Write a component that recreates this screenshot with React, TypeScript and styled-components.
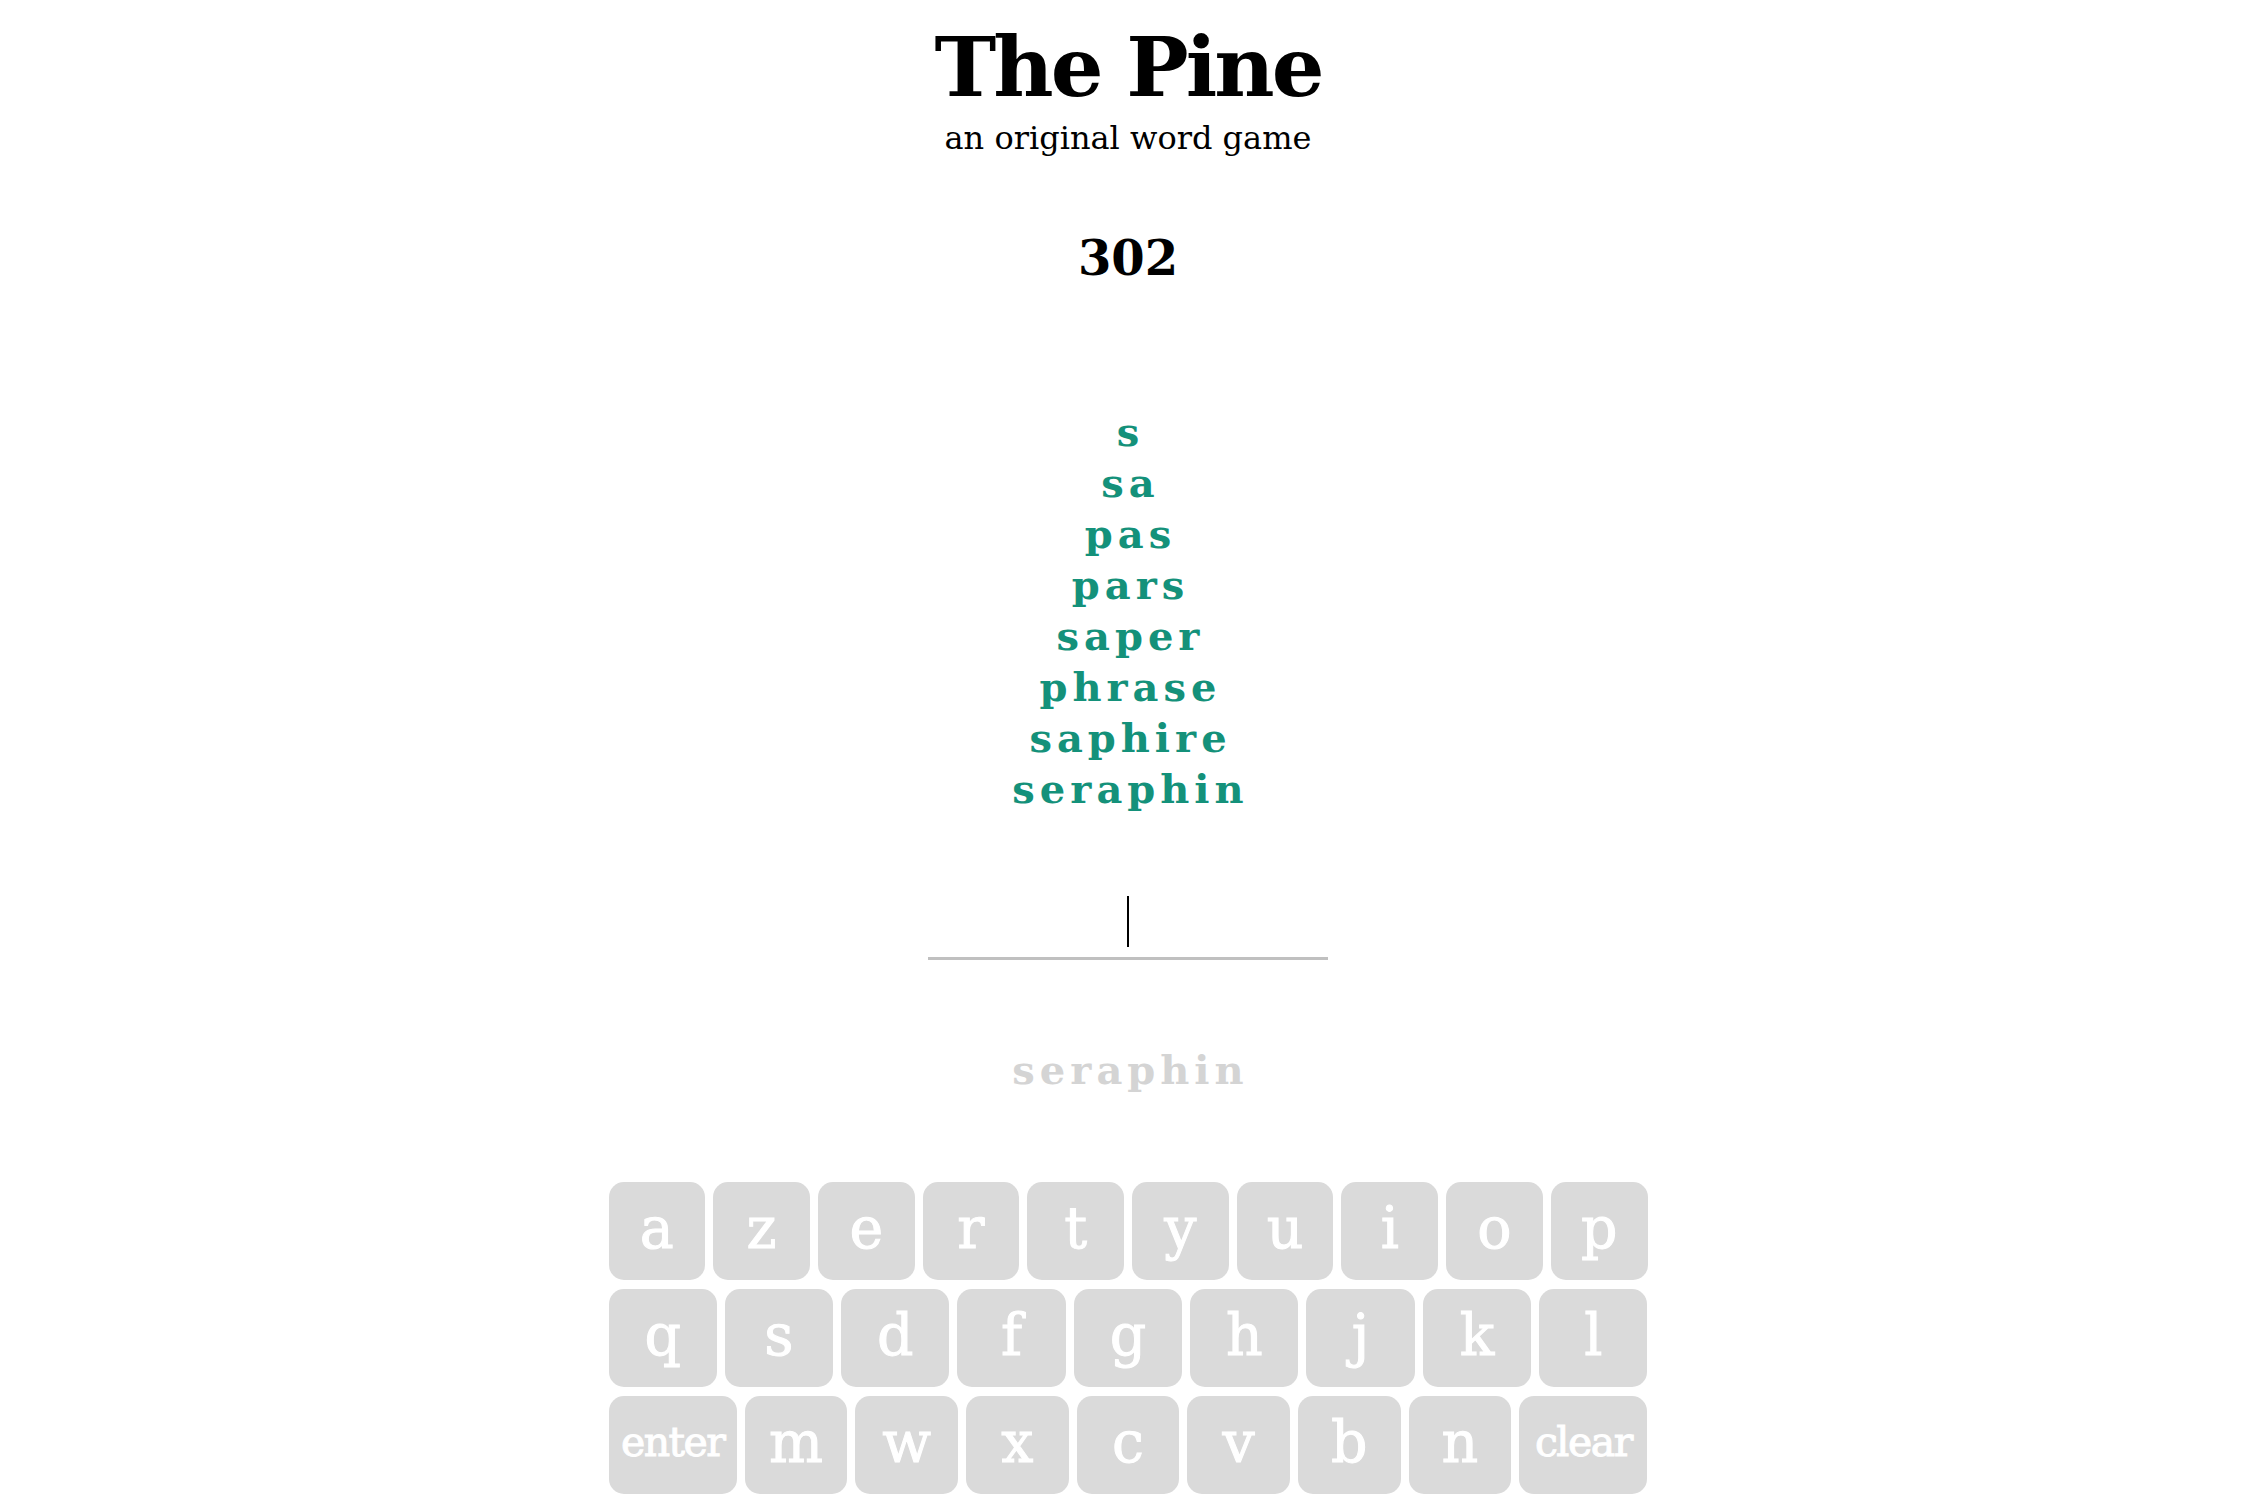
import React from "react";
import styled, { createGlobalStyle } from "styled-components";

const GlobalStyle = createGlobalStyle`
  html, body {
    margin: 0;
    padding: 0;
    background: #ffffff;
  }
  body {
    font-family: "DejaVu Serif", "Liberation Serif", serif;
    color: #000000;
  }
`;

const Page = styled.main`
  display: flex;
  flex-direction: column;
  align-items: center;
  width: 100%;
  min-height: 1504px;
`;

const Title = styled.h1`
  margin: 22px 0 0;
  font-size: 83px;
  line-height: 90px;
  font-weight: 700;
  letter-spacing: -3px;
`;

const Subtitle = styled.p`
  margin: 8px 0 0;
  font-size: 32px;
  line-height: 36px;
  font-weight: 400;
`;

const Score = styled.div`
  margin-top: 77px;
  font-size: 48px;
  line-height: 50px;
  font-weight: 700;
`;

const Pine = styled.ul`
  list-style: none;
  margin: 123px 0 0;
  padding: 0;
  display: flex;
  flex-direction: column;
  align-items: center;
`;

const Word = styled.li`
  font-size: 40px;
  line-height: 51px;
  font-weight: 700;
  letter-spacing: 5px;
  padding-left: 5px;
  color: #14917a;
`;

const InputBox = styled.div`
  margin-top: 82px;
  width: 400px;
  height: 64px;
  box-sizing: border-box;
  border-bottom: 3px solid #c0c0c0;
  display: flex;
  justify-content: center;
  align-items: flex-start;
`;

const Caret = styled.span`
  display: block;
  width: 2px;
  height: 51px;
  background: #000000;
`;

const Hint = styled.div`
  margin-top: 84px;
  font-size: 40px;
  line-height: 51px;
  font-weight: 700;
  letter-spacing: 5px;
  padding-left: 5px;
  color: #d4d4d4;
`;

const Keyboard = styled.div`
  margin-top: 87px;
  width: 1039px;
  display: flex;
  flex-direction: column;
  gap: 9px;
`;

const KeyRow = styled.div`
  display: flex;
  gap: 8px;
`;

const Key = styled.button<{ $wide?: boolean }>`
  flex: ${(p) => (p.$wide ? 1.25 : 1)} 1 0;
  height: 98px;
  border: none;
  border-radius: 15px;
  background: #dadada;
  color: #ffffff;
  -webkit-text-stroke: 1px #ffffff;
  font-family: "DejaVu Serif", "Liberation Serif", serif;
  font-size: ${(p) => (p.$wide ? "41px" : "57px")};
  letter-spacing: ${(p) => (p.$wide ? "-1.5px" : "0")};
  font-weight: 400;
  padding: 0 0 6px;
  display: flex;
  align-items: center;
  justify-content: center;
  cursor: pointer;
`;

const words = ["s", "sa", "pas", "pars", "saper", "phrase", "saphire", "seraphin"];
const rows: string[][] = [
  ["a", "z", "e", "r", "t", "y", "u", "i", "o", "p"],
  ["q", "s", "d", "f", "g", "h", "j", "k", "l"],
  ["enter", "m", "w", "x", "c", "v", "b", "n", "clear"],
];

export default function App() {
  return (
    <>
      <GlobalStyle />
      <Page>
        <Title>The Pine</Title>
        <Subtitle>an original word game</Subtitle>
        <Score>302</Score>
        <Pine>
          {words.map((w) => (
            <Word key={w}>{w}</Word>
          ))}
        </Pine>
        <InputBox>
          <Caret />
        </InputBox>
        <Hint>seraphin</Hint>
        <Keyboard>
          {rows.map((row, i) => (
            <KeyRow key={i}>
              {row.map((k) => (
                <Key key={k} $wide={k.length > 1}>
                  {k}
                </Key>
              ))}
            </KeyRow>
          ))}
        </Keyboard>
      </Page>
    </>
  );
}
